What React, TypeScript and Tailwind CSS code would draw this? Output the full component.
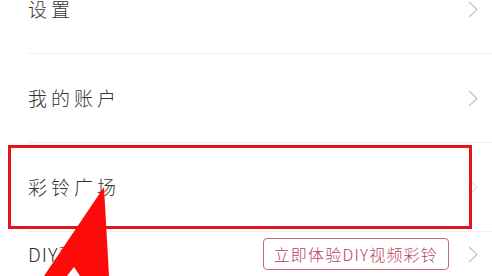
const cjk = { fontFamily: '"Noto Sans CJK SC", "Noto Sans", sans-serif' };

function Chevron({ faded }: { faded?: boolean }) {
  return (
    <svg
      width="10"
      height="17"
      viewBox="0 0 10 17"
      className={faded ? "ml-[19px] shrink-0 text-[#e4e4e4]" : "ml-[19px] shrink-0 text-[#c4c4c4]"}
    >
      <polyline
        points="1,1 9,8.5 1,16"
        fill="none"
        stroke="currentColor"
        strokeWidth="1.3"
      />
    </svg>
  );
}

function Row({
  label,
  extra,
  faded,
  last,
}: {
  label: React.ReactNode;
  extra?: React.ReactNode;
  faded?: boolean;
  last?: boolean;
}) {
  return (
    <div
      className={
        last
          ? "relative flex h-[44px] items-center pl-[28px] pr-[14px]"
          : "relative flex h-[89px] items-center pl-[28px] pr-[14px]"
      }
    >
      <span className="flex-1 text-[19px] font-light tracking-[4px] text-[#333]">
        {label}
      </span>
      {extra}
      <Chevron faded={faded} />
      {!last && (
        <div className="absolute bottom-0 left-[28px] right-0 h-px bg-[#efefef]" />
      )}
    </div>
  );
}

export default function App() {
  return (
    <div
      className="relative h-[276px] w-[492px] overflow-hidden bg-white"
      style={cjk}
    >
      <div className="-mt-[35px] flex flex-col">
        <Row label="设置" />
        <Row label="我的账户" />
        <Row label="彩铃广场" faded />
        <Row
          label={
            <>
              <span className="tracking-[1px]">DIY</span>彩铃
            </>
          }
          last
          extra={
            <span className="flex h-[32px] items-center rounded-[4px] border-[1.5px] border-[#c9677d] px-[10px] text-[16px] font-light tracking-[1.2px] text-[#b8405a]">
              立即体验DIY视频彩铃
            </span>
          }
        />
      </div>

      {/* highlight box */}
      <div className="absolute left-[8px] top-[145px] h-[84px] w-[464px] border-[3px] border-[#e3141b]" />

      {/* arrow */}
      <svg
        className="absolute left-0 top-0"
        width="492"
        height="276"
        viewBox="0 0 492 276"
      >
        <polygon
          points="104,187 109,276 80,276 74,267 67,276 44,276"
          fill="#ff0a0a"
        />
      </svg>
    </div>
  );
}
